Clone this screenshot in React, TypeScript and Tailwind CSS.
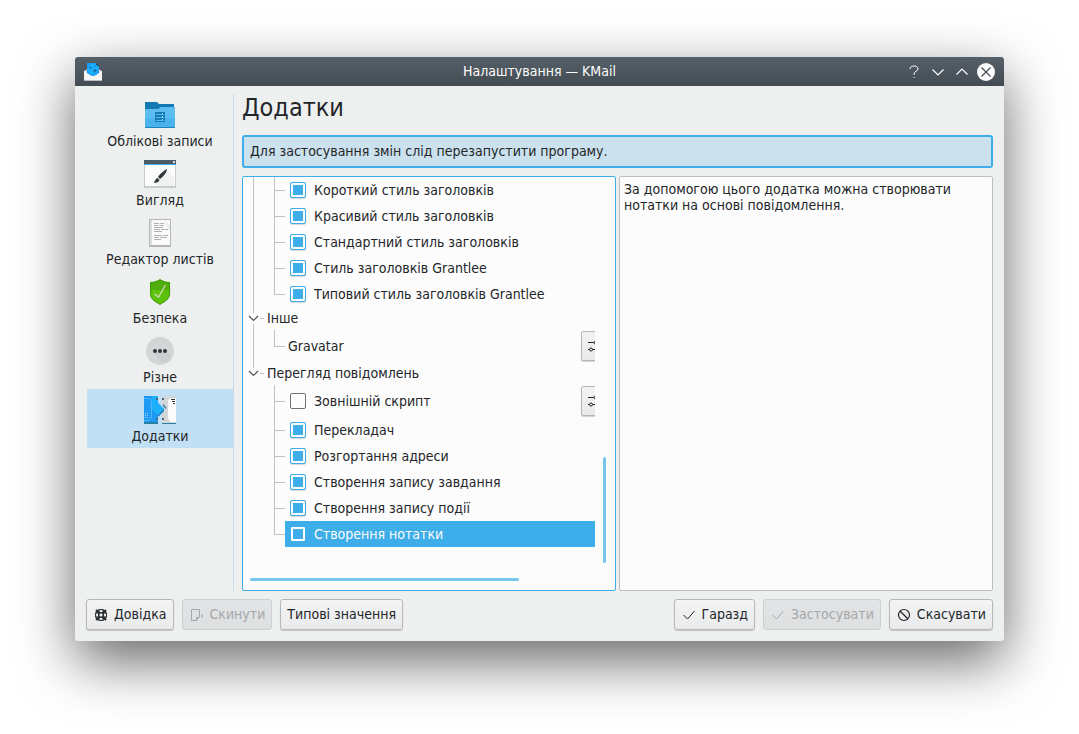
import { useState, type ReactNode } from "react";

function MailIcon() {
  return (
    <svg viewBox="0 0 18 18" className="size-[18px]" aria-hidden="true">
      <path d="M0 8l9-5 9 5v10H0z" fill="#d5d8d9" />
      <path d="M3 0h9l3 3v8l-6 3-6-3z" fill="#1d99f3" />
      <path d="M12 0l3 3h-3z" fill="#232629" />
      <circle cx="9" cy="6" r="5.5" fill="#1cb0fc" />
      <path d="M5 4l2-1 1 2-2 1zM9 7l3-1 1 2-3 2zM10 2l2 1-1 1z" fill="#1479b8" />
      <path d="M0 8l6 4q3 2 6 0l6-4v10H0z" fill="#f4f5f5" />
      <path d="M0 17h18v1H0z" fill="#b9bdbf" />
    </svg>
  );
}

function AccountsIcon() {
  return (
    <svg viewBox="0 0 32 32" className="size-8" aria-hidden="true">
      <path d="M1 3h12l2 2h15v9H1z" fill="#147ab3" />
      <path d="M2 10h12l3-2h14v21H1V11z" fill="#5cbdf0" />
      <path d="M1 19h30v9H1z" fill="#4ab3ec" />
      <path d="M1 28h30v1H1z" fill="#1e86bd" />
      <path d="M11 13h10v10H11z" fill="#147ab3" />
      <path d="M12 15.5h8M12 18.5h8M12 21.5h8" stroke="#5cbdf0" />
      <path d="M18 14.5h1M18 17.5h1M18 20.5h1" stroke="#9bd8f8" />
    </svg>
  );
}

function AppearanceIcon() {
  return (
    <svg viewBox="0 0 32 32" className="size-8" aria-hidden="true">
      <path d="M0 2h32v28H0z" fill="#c8cccd" />
      <path d="M1 7h30v21H1z" fill="#fcfcfc" />
      <path d="M0 2h32v4H0z" fill="#4d5b66" />
      <path d="M0 6h32v1H0z" fill="#3daee9" />
      <path d="M29 3h2v2h-2z" fill="#d9dcde" />
      <path d="M23 12l7 8v8H14l-4-4z" fill="#f0f1f1" />
      <path d="M23 11c-3 1-8 6-9 8l2 2c3-2 7-7 7-10z" fill="#31363b" />
      <path d="M13.5 20c-2 .5-2 3-4 4.5 3 .5 5.500-.5 6-2.5z" fill="#31363b" />
    </svg>
  );
}

function ComposerIcon() {
  return (
    <svg viewBox="0 0 32 32" className="size-8" aria-hidden="true">
      <path d="M5 2h22v28H5z" fill="#b4b7b9" />
      <path d="M6 3h20v25H6z" fill="#fafafa" />
      <path d="M6 3h2v25H6z" fill="#dcdedf" />
      <path d="M20 3l6 6v5z" fill="#e6e7e8" />
      <path
        d="M10 6.500h5M16 6.500h4M10 8.500h4M15 8.500h5M10 10.500h9M10 12.500h6M17 12.500h7M10 14.500h8M10 18.500h8M19 18.500h5M10 20.500h5M16 20.500h7M10 22.500h7"
        stroke="#b0b2b4"
        fill="none"
      />
    </svg>
  );
}

function SecurityIcon() {
  return (
    <svg viewBox="0 0 32 32" className="size-8" aria-hidden="true">
      <path d="M26 9l1 4v5l-2 4z" fill="#e0e1e1" />
      <path d="M16 3c3 2 6 3 10 3v12c0 5-5 8-10 11C11 26 6 23 6 18V6c4 0 7-1 10-3z" fill="#3f9b0a" />
      <path d="M16 4c3 2 6 3 9 3v7H7V7c3 0 6-1 9-3z" fill="#4fae0b" />
      <path d="M7 14h18v4c0 4-4 7-9 10-5-3-9-6-9-10z" fill="#5fc20a" />
      <path d="M10.5 18l4 3 7-12" fill="none" stroke="#d0dbc8" strokeWidth="1.2" />
    </svg>
  );
}

function MiscIcon() {
  return (
    <svg viewBox="0 0 32 32" className="size-8" aria-hidden="true">
      <circle cx="16" cy="16" r="14" fill="#d3d5d7" />
      <path d="M9 18l8 9h7l3-5-4-6z" fill="#cbced0" />
      <circle cx="11" cy="16" r="2" fill="#31363b" />
      <circle cx="16" cy="16" r="2" fill="#31363b" />
      <circle cx="21" cy="16" r="2" fill="#31363b" />
    </svg>
  );
}

function PluginsIcon() {
  return (
    <svg viewBox="0 0 32 32" className="size-8" aria-hidden="true">
      <path d="M18 2h14v28H18z" fill="#d3d7d9" />
      <path d="M32 4h-4c-3 0-4 2-4 4v14c0 4 2 6 4 6h4z" fill="#fcfcfc" />
      <path d="M14 9l6 6-6 8h4v-6l4-2-4-5z" fill="#c2e0f5" />
      <path d="M0 2h14v7l6 6-6 6v9H0z" fill="#1d99f3" />
      <path d="M8 2h6v7l6 6-6 6-8-8z" fill="#1cb0fc" />
      <path d="M0 28h14v2H0zM18 29h14v1H18z" fill="#2980a5" />
      <path d="M20 15l-6 6v2l6-6z" fill="#1b75b5" />
      <path d="M0 4.500h4c2.500 0 3.500 1 3.500 3.500v14c0 3-1 4.500-3.500 4.500H0" fill="none" stroke="#50b8f6" />
      <path d="M1.500 19v5M3.500 19v5" stroke="#a5dbfb" strokeDasharray="1 1" />
      <path d="M19 10.500l3 4" stroke="#4e7c98" strokeWidth="1.5" />
      <path d="M12 4h2v2h-2zM12 24h2v2h-2zM18 4h2v2h-2zM18 24h2v2h-2z" fill="#4a6472" />
      <path d="M27 5.500h4M28 7.500h3M29 9.500h2" stroke="#31363b" />
    </svg>
  );
}

function ConfigureIcon() {
  return (
    <svg viewBox="0 0 16 16" className="size-4 shrink-0" fill="none" stroke="#232629" aria-hidden="true">
      <path d="M0 4.500h6M0 11.500h1.500M4.500 11.500H16M9 4.500h7" />
      <circle cx="3" cy="11.5" r="1.5" />
      <circle cx="7.5" cy="4.5" r="1.5" />
    </svg>
  );
}

function HelpIcon() {
  return (
    <svg viewBox="0 0 16 16" className="size-4" fill="none" stroke="#232629" aria-hidden="true">
      <circle cx="8" cy="8" r="5.5" />
      <circle cx="8" cy="8" r="2.5" />
      <path d="M6 2v12M10 2v12M2 6h12M2 10h12" />
      <path d="M3 3l3 3M13 3l-3 3M3 13l3-3M13 13l-3-3" strokeWidth="2" />
    </svg>
  );
}

function ResetIcon() {
  return (
    <svg viewBox="0 0 16 16" className="size-4" fill="none" stroke="currentColor" aria-hidden="true">
      <path d="M8 13.500H2.500v-11h8V10" />
      <path d="M7 14v-4h4z" fill="currentColor" stroke="none" />
      <path d="M12 9l2-2v4z" fill="currentColor" stroke="none" />
    </svg>
  );
}

function CheckIcon() {
  return (
    <svg viewBox="0 0 16 16" className="size-4" fill="none" stroke="currentColor" aria-hidden="true">
      <path d="M2.500 8l4 4 7-8" />
    </svg>
  );
}

function CancelIcon() {
  return (
    <svg viewBox="0 0 16 16" className="size-4" fill="none" stroke="currentColor" aria-hidden="true">
      <circle cx="8" cy="8" r="5.5" strokeWidth="1.2" />
      <path d="M4 4l8 8" strokeWidth="1.2" />
    </svg>
  );
}

const pages = [
  { title: "Облікові записи", icon: <AccountsIcon /> },
  { title: "Вигляд", icon: <AppearanceIcon /> },
  { title: "Редактор листів", icon: <ComposerIcon /> },
  { title: "Безпека", icon: <SecurityIcon /> },
  { title: "Різне", icon: <MiscIcon /> },
  { title: "Додатки", icon: <PluginsIcon /> },
];

type Plugin = { name: string; checked?: boolean; configurable?: boolean };

const headerStyles: Plugin[] = [
  { name: "Короткий стиль заголовків", checked: true },
  { name: "Красивий стиль заголовків", checked: true },
  { name: "Стандартний стиль заголовків", checked: true },
  { name: "Стиль заголовків Grantlee", checked: true },
  { name: "Типовий стиль заголовків Grantlee", checked: true },
];

const otherPlugins: Plugin[] = [{ name: "Gravatar", configurable: true }];

const viewerPlugins: Plugin[] = [
  { name: "Зовнішній скрипт", checked: false, configurable: true },
  { name: "Перекладач", checked: true },
  { name: "Розгортання адреси", checked: true },
  { name: "Створення запису завдання", checked: true },
  { name: "Створення запису події", checked: true },
  { name: "Створення нотатки", checked: false },
];

function GroupRow({ title, last = false }: { title: string; last?: boolean }) {
  return (
    <li className="flex h-[23px]">
      <button type="button" className="flex w-[21px] flex-col items-center" aria-label={`Згорнути: ${title}`}>
        <span className="w-px flex-1 bg-[#c0c1c2]" />
        <svg viewBox="0 0 11 11" className="size-[11px]" fill="none" stroke="#4d5155" aria-hidden="true">
          <path d="M1 3l4.500 4.500L10 3" strokeWidth="1.2" />
        </svg>
        <span className={last ? "flex-1" : "w-px flex-1 bg-[#c0c1c2]"} />
      </button>
      <span className="-ml-1 h-px w-1 self-center bg-[#c0c1c2]" />
      <span className="pl-[3px] leading-[23px]">{title}</span>
    </li>
  );
}

function PluginRow({
  plugin,
  rootLine,
  last,
  selected,
  onSelect,
}: {
  plugin: Plugin;
  rootLine: boolean;
  last: boolean;
  selected: boolean;
  onSelect: () => void;
}) {
  const hasBox = plugin.checked !== undefined;

  return (
    <li className={plugin.configurable ? "flex h-8" : "flex h-[26px]"} onClick={onSelect}>
      <span className={`ml-[10px] w-[21px] border-l ${rootLine ? "border-[#c0c1c2]" : "border-transparent"}`} />
      <span className="flex w-[11px] flex-col">
        <span className="flex-1 border-b border-l border-[#c0c1c2]" />
        <span className={`flex-1 border-l ${last ? "border-transparent" : "border-[#c0c1c2]"}`} />
      </span>
      <span className={`flex min-w-0 flex-1 items-center overflow-hidden ${selected ? "bg-[#3daee9] text-[#fcfcfc]" : ""}`}>
        {hasBox ? (
          <label className="flex flex-1 items-center gap-2 pl-[5px]">
            {selected ? (
              <input
                type="checkbox"
                defaultChecked={plugin.checked}
                className="mx-px size-[14px] appearance-none rounded-[1px] border-2 border-[#fcfcfc] checked:bg-[#fcfcfc]"
              />
            ) : (
              <input
                type="checkbox"
                defaultChecked={plugin.checked}
                className="size-4 appearance-none rounded-[2px] border border-[#6e7173] checked:border-[#3daee9] checked:bg-[#3daee9] checked:shadow-[inset_0_0_0_2px_#fcfcfc,0_1px_1px_rgba(0,0,0,0.15)]"
              />
            )}
            {plugin.name}
          </label>
        ) : (
          <span className="flex-1 pl-[3px]">{plugin.name}</span>
        )}
        {plugin.configurable && (
          <button
            type="button"
            aria-label={`Налаштувати: ${plugin.name}`}
            className="-mr-4 flex h-[30px] w-[30px] shrink-0 items-center justify-center rounded-[2px] border border-[#b5b7b8] bg-linear-to-b from-[#f3f3f4] to-[#e8e9ea] shadow-[0_1px_1px_rgba(0,0,0,0.18)]"
          >
            <ConfigureIcon />
          </button>
        )}
      </span>
    </li>
  );
}

function DialogButton({ icon, disabled, children }: { icon?: ReactNode; disabled?: boolean; children: ReactNode }) {
  return (
    <button
      type="button"
      disabled={disabled}
      className="flex h-[31px] items-center gap-[5px] rounded-[3px] border border-[#b5b7b8] bg-linear-to-b from-[#f4f4f5] to-[#e9eaeb] px-[6px] shadow-[0_1px_1px_rgba(0,0,0,0.18)] disabled:border-[#cdcfd0] disabled:from-[#e3e4e5] disabled:to-[#dddfe0] disabled:text-[#a5a8aa] disabled:shadow-none"
    >
      {icon}
      {children}
    </button>
  );
}

export default function App() {
  const [page, setPage] = useState("Додатки");
  const [current, setCurrent] = useState("Створення нотатки");

  const renderPlugins = (plugins: Plugin[], rootLine: boolean) =>
    plugins.map((plugin, i) => (
      <PluginRow
        key={plugin.name}
        plugin={plugin}
        rootLine={rootLine}
        last={i === plugins.length - 1}
        selected={plugin.name === current}
        onSelect={() => setCurrent(plugin.name)}
      />
    ));

  return (
    <div className="min-h-screen bg-white px-[75px] py-[57px] font-['DejaVu_Sans_Condensed','DejaVu_Sans',sans-serif] text-[14px] text-[#232629]">
      <div className="rounded-[3px] bg-[#eef0f0] shadow-[0_20px_56px_rgba(0,0,0,0.6)]">
        <header className="grid h-[29px] grid-cols-[1fr_auto_1fr] items-center rounded-t-[3px] bg-linear-to-b from-[#566069] to-[#434c53] px-[9px] text-[#fcfcfc]">
          <MailIcon />
          <h1>Налаштування — KMail</h1>
          <div className="flex items-center justify-end gap-[6px]">
            <button type="button" aria-label="Довідка" className="size-[18px]">
              <svg viewBox="0 0 18 18" fill="none" stroke="#fcfcfc">
                <path d="M5 6c0-2 1.500-3 4-3s4 1 4 3-4 2.500-4 5v1M9 14v1" />
              </svg>
            </button>
            <button type="button" aria-label="Мінімізувати" className="size-[18px]">
              <svg viewBox="0 0 18 18" fill="none" stroke="#fcfcfc">
                <path d="M3.500 6.500L9 12l5.500-5.500" strokeWidth="1.2" />
              </svg>
            </button>
            <button type="button" aria-label="Максимізувати" className="size-[18px]">
              <svg viewBox="0 0 18 18" fill="none" stroke="#fcfcfc">
                <path d="M3.500 11.500L9 6l5.500 5.500" strokeWidth="1.2" />
              </svg>
            </button>
            <button type="button" aria-label="Закрити" className="size-[18px]">
              <svg viewBox="0 0 18 18" fill="none" stroke="#434c53">
                <circle cx="9" cy="9" r="9" fill="#fcfcfc" stroke="none" />
                <path d="M4.500 4.500l9 9M13.500 4.500l-9 9" strokeWidth="1.2" />
              </svg>
            </button>
          </div>
        </header>

        <div className="px-[11px] pt-2 pb-[11px]">
          <div className="flex gap-2">
            <nav className="w-[148px] shrink-0 border-r border-[#c8dbe7] pl-px">
              {pages.map(({ title, icon }) => (
                <button
                  key={title}
                  type="button"
                  onClick={() => setPage(title)}
                  className={`flex h-[59px] w-full flex-col items-center pt-[5px] leading-5 ${page === title ? "bg-[#c2e0f5]" : ""}`}
                >
                  {icon}
                  {title}
                </button>
              ))}
            </nav>

            <main className="min-w-0 flex-1">
              <h2 className="mb-[13px] text-[25px] leading-7">Додатки</h2>
              <p className="mb-2 rounded-[3px] border-2 border-[#3daee9] bg-[#cce1ee] px-[6px] leading-[29px]">
                Для застосування змін слід перезапустити програму.
              </p>

              <div className="grid grid-cols-2 gap-[3px]">
                <section className="flex rounded-[2px] border border-[#3daee9] bg-[#fcfcfc]">
                  <div className="min-w-0 flex-1">
                    <ul>
                      {renderPlugins(headerStyles, true)}
                      <GroupRow title="Інше" />
                      {renderPlugins(otherPlugins, true)}
                      <GroupRow title="Перегляд повідомлень" last />
                      {renderPlugins(viewerPlugins, false)}
                    </ul>
                    <div className="px-[7px] pt-[31px] pb-[9px]" aria-hidden="true">
                      <div className="h-[3px] w-[269px] rounded-full bg-[#76c6f0]" />
                    </div>
                  </div>
                  <div className="w-5 pt-[280px] pl-2" aria-hidden="true">
                    <div className="h-[106px] w-[3px] rounded-full bg-[#76c6f0]" />
                  </div>
                </section>

                <section className="rounded-[2px] border border-[#bcbebf] bg-[#fcfcfc] px-1 py-1 leading-4">
                  За допомогою цього додатка можна створювати нотатки на основі повідомлення.
                </section>
              </div>
            </main>
          </div>

          <footer className="mt-2 flex gap-2">
            <DialogButton icon={<HelpIcon />}>Довідка</DialogButton>
            <DialogButton icon={<ResetIcon />} disabled>
              Скинути
            </DialogButton>
            <DialogButton>Типові значення</DialogButton>
            <span className="flex-1" />
            <DialogButton icon={<CheckIcon />}>Гаразд</DialogButton>
            <DialogButton icon={<CheckIcon />} disabled>
              Застосувати
            </DialogButton>
            <DialogButton icon={<CancelIcon />}>Скасувати</DialogButton>
          </footer>
        </div>
      </div>
    </div>
  );
}
